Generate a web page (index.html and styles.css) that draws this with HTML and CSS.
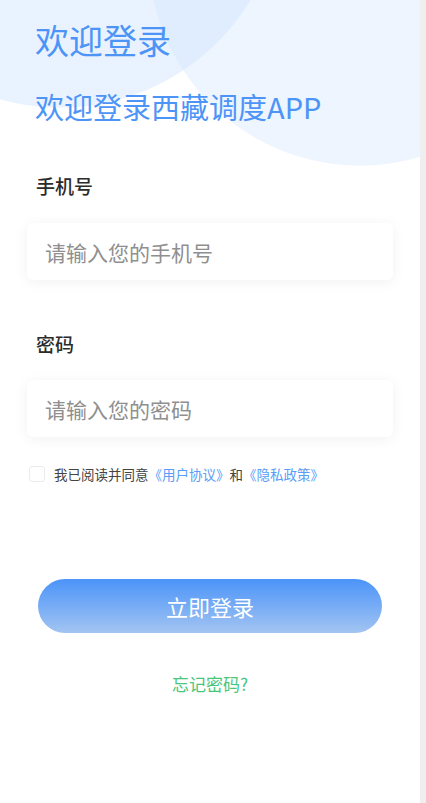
FILE: index.html
```html
<!DOCTYPE html>
<html lang="zh-CN">

<head>
    <meta charset="UTF-8" />
    <meta name="viewport" content="width=device-width, initial-scale=1.0" />
    <title>登录 | 西藏调度</title>
    <link rel="stylesheet" href="styles.css">
</head>

<body>
    <div class="page">
        <div class="header">
            <h1 class="title">欢迎登录</h1>
            <p class="subtitle">欢迎登录西藏调度APP</p>
        </div>

        <form class="login-form" onsubmit="return false">
            <label class="field-label" for="phone">手机号</label>
            <div class="field">
                <input type="text" id="phone" placeholder="请输入您的手机号" />
            </div>

            <label class="field-label field-label-second" for="password">密码</label>
            <div class="field">
                <input type="password" id="password" placeholder="请输入您的密码" />
            </div>

            <div class="agree-row">
                <span class="check-box"></span>
                <span class="agree-text">我已阅读并同意<a href="#">《用户协议》</a>和<a href="#">《隐私政策》</a></span>
            </div>

            <button type="submit" class="login-btn">立即登录</button>

            <a href="#" class="forgot">忘记密码?</a>
        </form>
    </div>
    <div class="scroll-track"></div>
</body>

</html>
```

FILE: styles.css
```css
* {
    box-sizing: border-box;
    margin: 0;
    padding: 0;
}

body {
    font-family: "Noto Sans CJK SC", "Noto Sans", sans-serif;
    display: flex;
    min-height: 803px;
    background: #fff;
    overflow: hidden;
}

.page {
    flex: 0 0 420px;
    min-height: 803px;
    background:
        radial-gradient(circle 223px at 60px -115px, rgba(206, 227, 253, 0.45) 222px, rgba(206, 227, 253, 0) 223px),
        radial-gradient(circle 212px at 360px -46px, rgba(206, 227, 253, 0.36) 211px, rgba(206, 227, 253, 0) 212px),
        #fff;
}

.scroll-track {
    flex: 1;
    background: #efefef;
}

.header {
    padding: 19px 0 0 35px;
    color: #4d94f7;
}

.title {
    font-size: 34px;
    line-height: 42px;
    font-weight: 400;
}

.subtitle {
    margin-top: 25px;
    font-size: 29px;
    line-height: 40px;
    font-weight: 400;
}

.login-form {
    display: flex;
    flex-direction: column;
    padding: 47px 27px 0;
}

.field-label {
    padding-left: 9px;
    font-size: 19px;
    line-height: 26px;
    font-weight: 500;
    color: #2b2b2b;
}

.field-label-second {
    margin-top: 51px;
}

.field {
    margin-top: 24px;
    height: 57px;
    background: #fff;
    border-radius: 6px;
    box-shadow: 0 2px 14px rgba(0, 0, 0, 0.06);
}

.field-label-second + .field {
    margin-top: 23px;
}

.field input {
    width: 100%;
    height: 100%;
    padding: 0 18px;
    border: none;
    outline: none;
    background: transparent;
    font-family: inherit;
    font-size: 21px;
    color: #333;
}

.field input::placeholder {
    color: #8f8f8f;
}

.agree-row {
    display: flex;
    align-items: center;
    gap: 9px;
    margin-top: 27px;
    padding-left: 2px;
    height: 20px;
}

.check-box {
    width: 16px;
    height: 16px;
    border: 1px solid #ececec;
    border-radius: 3px;
    background: #fff;
}

.agree-text {
    font-size: 13.5px;
    color: #444;
}

.agree-text a {
    color: #5a9cf6;
    text-decoration: none;
}

.login-btn {
    margin: 95px 11px 0;
    height: 54px;
    border: none;
    border-radius: 27px;
    background: linear-gradient(to bottom, #4b94f8, #a3c4f2);
    color: #fff;
    font-family: inherit;
    font-size: 22px;
    cursor: pointer;
}

.forgot {
    margin-top: 39px;
    align-self: center;
    font-size: 17px;
    line-height: 24px;
    color: #48c67a;
    text-decoration: none;
}
```
